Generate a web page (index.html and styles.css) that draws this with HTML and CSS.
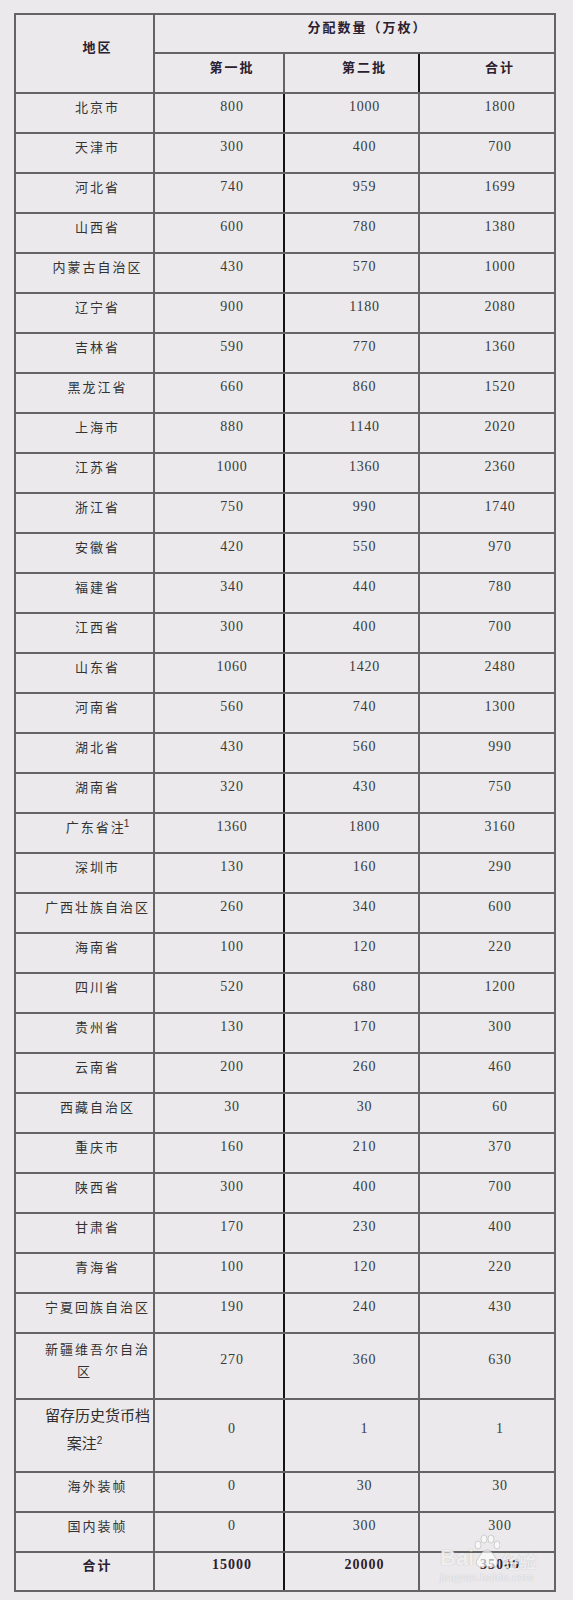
FILE: index.html
```html
<!DOCTYPE html>
<html lang="zh-CN">
<head>
<meta charset="utf-8">
<title>分配数量</title>
<link rel="stylesheet" href="styles.css">
</head>
<body>
<div class="page">
<table class="alloc">
  <colgroup>
    <col class="c1"><col class="c2"><col class="c3"><col class="c4">
  </colgroup>
  <thead>
    <tr class="h1">
      <th rowspan="2" class="name">地区</th>
      <th colspan="3" class="name">分配数量（万枚）</th>
    </tr>
    <tr class="sub">
      <th class="name">第一批</th>
      <th class="name">第二批</th>
      <th class="name">合计</th>
    </tr>
  </thead>
  <tbody>
    <tr><td class="name">北京市</td><td class="num">800</td><td class="num">1000</td><td class="num">1800</td></tr>
    <tr><td class="name">天津市</td><td class="num">300</td><td class="num">400</td><td class="num">700</td></tr>
    <tr><td class="name">河北省</td><td class="num">740</td><td class="num">959</td><td class="num">1699</td></tr>
    <tr><td class="name">山西省</td><td class="num">600</td><td class="num">780</td><td class="num">1380</td></tr>
    <tr><td class="name">内蒙古自治区</td><td class="num">430</td><td class="num">570</td><td class="num">1000</td></tr>
    <tr><td class="name">辽宁省</td><td class="num">900</td><td class="num">1180</td><td class="num">2080</td></tr>
    <tr><td class="name">吉林省</td><td class="num">590</td><td class="num">770</td><td class="num">1360</td></tr>
    <tr><td class="name">黑龙江省</td><td class="num">660</td><td class="num">860</td><td class="num">1520</td></tr>
    <tr><td class="name">上海市</td><td class="num">880</td><td class="num">1140</td><td class="num">2020</td></tr>
    <tr><td class="name">江苏省</td><td class="num">1000</td><td class="num">1360</td><td class="num">2360</td></tr>
    <tr><td class="name">浙江省</td><td class="num">750</td><td class="num">990</td><td class="num">1740</td></tr>
    <tr><td class="name">安徽省</td><td class="num">420</td><td class="num">550</td><td class="num">970</td></tr>
    <tr><td class="name">福建省</td><td class="num">340</td><td class="num">440</td><td class="num">780</td></tr>
    <tr><td class="name">江西省</td><td class="num">300</td><td class="num">400</td><td class="num">700</td></tr>
    <tr><td class="name">山东省</td><td class="num">1060</td><td class="num">1420</td><td class="num">2480</td></tr>
    <tr><td class="name">河南省</td><td class="num">560</td><td class="num">740</td><td class="num">1300</td></tr>
    <tr><td class="name">湖北省</td><td class="num">430</td><td class="num">560</td><td class="num">990</td></tr>
    <tr><td class="name">湖南省</td><td class="num">320</td><td class="num">430</td><td class="num">750</td></tr>
    <tr><td class="name">广东省<span class="note">注<sup>1</sup></span></td><td class="num">1360</td><td class="num">1800</td><td class="num">3160</td></tr>
    <tr><td class="name">深圳市</td><td class="num">130</td><td class="num">160</td><td class="num">290</td></tr>
    <tr><td class="name">广西壮族自治区</td><td class="num">260</td><td class="num">340</td><td class="num">600</td></tr>
    <tr><td class="name">海南省</td><td class="num">100</td><td class="num">120</td><td class="num">220</td></tr>
    <tr><td class="name">四川省</td><td class="num">520</td><td class="num">680</td><td class="num">1200</td></tr>
    <tr><td class="name">贵州省</td><td class="num">130</td><td class="num">170</td><td class="num">300</td></tr>
    <tr><td class="name">云南省</td><td class="num">200</td><td class="num">260</td><td class="num">460</td></tr>
    <tr><td class="name">西藏自治区</td><td class="num">30</td><td class="num">30</td><td class="num">60</td></tr>
    <tr><td class="name">重庆市</td><td class="num">160</td><td class="num">210</td><td class="num">370</td></tr>
    <tr><td class="name">陕西省</td><td class="num">300</td><td class="num">400</td><td class="num">700</td></tr>
    <tr><td class="name">甘肃省</td><td class="num">170</td><td class="num">230</td><td class="num">400</td></tr>
    <tr><td class="name">青海省</td><td class="num">100</td><td class="num">120</td><td class="num">220</td></tr>
    <tr><td class="name">宁夏回族自治区</td><td class="num">190</td><td class="num">240</td><td class="num">430</td></tr>
    <tr class="tall"><td class="name">新疆维吾尔自治区</td><td class="num">270</td><td class="num">360</td><td class="num">630</td></tr>
    <tr class="taller"><td class="name big"><span class="l1">留存历史货币档</span><span class="l2">案注<sup>2</sup></span></td><td class="num">0</td><td class="num">1</td><td class="num">1</td></tr>
    <tr><td class="name">海外装帧</td><td class="num">0</td><td class="num">30</td><td class="num">30</td></tr>
    <tr><td class="name">国内装帧</td><td class="num">0</td><td class="num">300</td><td class="num">300</td></tr>
    <tr class="total"><td class="name strong">合计</td><td class="num strong">15000</td><td class="num strong">20000</td><td class="num strong">35000</td></tr>
  </tbody>
</table>

<div class="wm">
  <div class="wm-row">
    <span class="wm-bai">Bai</span>
    <svg class="wm-paw" viewBox="0 0 26 36" aria-hidden="true">
      <ellipse cx="4" cy="12" rx="3" ry="4"/>
      <ellipse cx="10" cy="6" rx="3" ry="4"/>
      <ellipse cx="17" cy="6" rx="3" ry="4"/>
      <ellipse cx="23" cy="12" rx="3" ry="4"/>
      <path d="M13 17 C8 17 6 23 3 27 C1 30 3 35 8 34 C11 33 15 33 18 34 C23 35 25 30 23 27 C20 23 18 17 13 17 Z"/>
    </svg>
    <span class="wm-jy">经验</span>
  </div>
  <div class="wm-url">jingyan.baidu.com</div>
</div>
</div>
</body>
</html>
```
FILE: styles.css
```css
html, body {
  margin: 0;
  background: #ebe9ec;
}

.page {
  position: relative;
  padding: 13px 0 0 14px;
  min-height: 1587px;
}

.alloc {
  border-collapse: collapse;
  table-layout: fixed;
  width: 542px;
}

.c1 { width: 139px; }
.c2 { width: 130px; }
.c3 { width: 135px; }
.c4 { width: 136px; }

.alloc tr { height: 40px; }
.alloc tr.h1 { height: 39px; }
.alloc tr.tall { height: 66px; }
.alloc tr.taller { height: 69px; }
.alloc tr.total { height: 39px; }

.alloc th,
.alloc td {
  border: 2px solid #646464;
  padding: 1px 2px 14px;
  text-align: center;
  vertical-align: middle;
  text-indent: 26px;
  line-height: 22px;
}

.alloc td:nth-child(2),
.alloc .sub th:nth-child(2) {
  border-right-color: #141414;
}

.name {
  font-family: "Noto Sans CJK SC", "Liberation Sans", sans-serif;
  font-size: 13px;
  letter-spacing: 2px;
  color: #333;
  font-weight: 400;
}

.alloc th.name {
  font-weight: 700;
  color: #2a2030;
}

.num {
  font-family: "Liberation Serif", serif;
  font-size: 14px;
  letter-spacing: 0.8px;
  color: #3a3a3a;
}

.strong {
  font-weight: 700;
  color: #2a2030;
}

.num.strong {
  letter-spacing: 1px;
}

.note {
  letter-spacing: 0;
}

.alloc sup {
  font-family: "Liberation Sans", sans-serif;
  font-size: 10px;
  line-height: 0;
  vertical-align: 5px;
  letter-spacing: 0;
}

.alloc td.big {
  font-size: 15px;
  letter-spacing: 0;
  line-height: 28px;
  color: #2e2e2e;
}

.big .l1 {
  display: block;
  padding-left: 26px;
  text-indent: 0;
}

.big .l2 {
  display: block;
  text-indent: 0;
}

/* watermark overlay */
.wm {
  position: absolute;
  left: 440px;
  top: 1532px;
  color: rgba(255, 255, 255, 0.8);
  text-shadow: 0 0 1px rgba(120, 120, 120, 0.5);
  pointer-events: none;
}

.wm-row {
  display: flex;
  align-items: flex-end;
  height: 37px;
}

.wm-bai {
  font: 700 22px/1 "Liberation Sans", sans-serif;
}

.wm-paw {
  width: 26px;
  height: 36px;
  fill: rgba(255, 255, 255, 0.65);
  stroke: rgba(150, 150, 150, 0.5);
  stroke-width: 0.8;
}

.wm-jy {
  font: 700 17px/1 "Noto Sans CJK SC", sans-serif;
  margin-left: 2px;
}

.wm-url {
  font: 11px/1 "Liberation Sans", sans-serif;
  letter-spacing: 0.3px;
  margin-top: 3px;
}
```
